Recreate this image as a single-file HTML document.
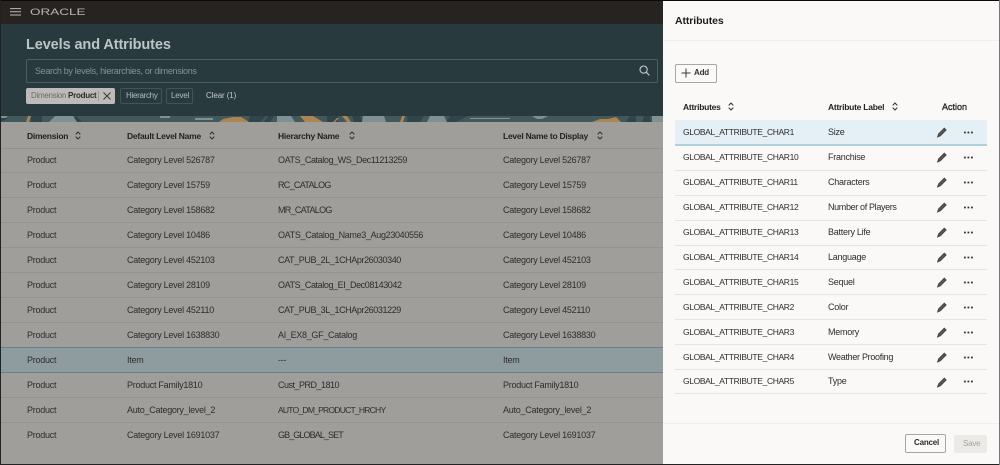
<!DOCTYPE html>
<html><head><meta charset="utf-8">
<style>
html,body{margin:0;padding:0;background:#000}
#p{position:relative;width:1000px;height:465px;overflow:hidden;background:#a09e9b;font-family:"Liberation Sans",sans-serif;font-size:9px;color:#2f2d2b}
#p div{position:absolute;white-space:nowrap}
.r{left:1px;width:662px;height:25px;border-bottom:1px solid #94928f;box-sizing:border-box}
.t{line-height:12px;letter-spacing:-.26px}
.g{font-size:8.5px;letter-spacing:-.36px}
.h{font-weight:bold;color:#24221f;font-size:8.5px;letter-spacing:-.25px}
.s{width:6px;height:9px;position:absolute}
.pr{left:675px;width:312px;height:25px;border-bottom:1px solid #e6e4e1;box-sizing:border-box}
</style></head><body>
<div id="p">
<div style="left:0;top:0;width:1000px;height:1px;background:#0a0a0a;z-index:9"></div>
<div style="left:0;top:0;width:1px;height:465px;background:#222;z-index:9"></div>
<div style="left:0;top:464px;width:1000px;height:1px;background:#222;z-index:9"></div>
<div style="left:999px;top:0;width:1px;height:465px;background:#777;z-index:9"></div>

<div style="left:0;top:1px;width:663px;height:23px;background:#272320"></div>
<svg style="position:absolute;left:10px;top:8px" width="11" height="8"><path d="M0 .6h11M0 3.8h11M0 7h11" stroke="#bdbbb8" stroke-width="1"/></svg>
<div class="t" style="left:30px;top:6px;font-size:9.5px;letter-spacing:0;color:#b9b7b4;line-height:13px;transform:scaleX(1.42);transform-origin:left">ORACLE</div>

<div style="left:0;top:24px;width:663px;height:98px;background:#283a3e"></div>
<svg style="position:absolute;left:0;top:116px" width="663" height="6">
<rect width="663" height="6" fill="#42595b"/>
<path d="M0 0h8l-1 3-7 3zM31 0h11v6H31zM76 0l6 6H70zM160 0h8l2 2-8 0zM250 0h16l-6 6h-12zM268 0h6l-4 6h-6zM327 0h11v6h-11zM352 0h8l3 6h-9zM407 0h17l-4 6h-13zM450 0h18l-12 6h-10zM630 0h6v6h-10zM644 0h6l1 6h-9z" fill="#2f4549"/>
<path d="M0 0h8l-2 2H0zM55 0h18l4 6H49zM277 0h14l4 6h-18zM363 0h21l2 6h-24zM430 0h14l3 6h-20zM532 0h16l-6 3h-5zM652 0h11v6h-11zM160 0h10v2h-10zM195 2h18v2h-18zM470 2h40v1h-40z" fill="#7f9193"/>
<path d="M28 0h3l-2 6h-3zM219 6l4-3 10-2 8 0 5 3 3 2zM300 0h13l10 6h-18zM333 6l4-4h2l-4 4zM342 0h5l4 6h-4zM402 0h3l-2 6h-3zM592 6l8-3 8 0 8-2 5 5z" fill="#ab8552"/>
</svg>

<div class="t" style="left:26px;top:36px;font-size:14.5px;letter-spacing:-.1px;line-height:18px;font-weight:bold;color:#bcc5c6">Levels and Attributes</div>
<div style="left:26px;top:59px;width:630px;height:22px;border:1px solid #4a5f62;border-radius:2px"></div>
<div class="t" style="left:35px;top:65px;letter-spacing:-.33px;color:#849192">Search by levels, hierarchies, or dimensions</div>
<svg style="position:absolute;left:639px;top:65px" width="11" height="11" fill="none" stroke="#c5cacb" stroke-width="1.1"><circle cx="4.6" cy="4.6" r="3.6"/><path d="M7.3 7.3l3 3"/></svg>

<div style="left:26px;top:88px;width:89px;height:16px;background:#bdbbb8;border-radius:2px"></div>
<div class="t" style="left:31px;top:90px;font-size:8px;letter-spacing:-.3px;color:#6c6a67">Dimension</div>
<div class="t" style="left:68px;top:90px;font-size:8px;letter-spacing:-.25px;font-weight:bold;color:#2b2926">Product</div>
<div style="left:98px;top:91px;width:1px;height:10px;background:#9e9c99"></div>
<svg style="position:absolute;left:103px;top:92px" width="8" height="8" stroke="#3a3835" stroke-width="1"><path d="M.5.5l7 7M7.5.5l-7 7"/></svg>
<div style="left:120px;top:88px;width:40px;height:14px;border:1px solid #3f5558;border-radius:2px"></div>
<div class="t" style="left:126px;top:90px;font-size:8px;letter-spacing:-.3px;color:#b4bcbc">Hierarchy</div>
<div style="left:166px;top:88px;width:25px;height:14px;border:1px solid #3f5558;border-radius:2px"></div>
<div class="t" style="left:171px;top:90px;font-size:8px;letter-spacing:-.2px;color:#b4bcbc">Level</div>
<div class="t" style="left:206px;top:90px;font-size:8px;letter-spacing:-.1px;color:#c2c8c8">Clear (1)</div>

<!-- left header -->
<div style="left:1px;top:148px;width:662px;height:1px;background:#92908d"></div>
<div class="t h" style="left:27px;top:130px">Dimension</div>
<svg class="s" style="left:75px;top:131px" viewBox="0 0 6 9" fill="none" stroke="#33312e"><path d="M.7 3.4L3 1l2.3 2.4M.7 5.6L3 8l2.3-2.400"/></svg>
<div class="t h" style="left:127px;top:130px">Default Level Name</div>
<svg class="s" style="left:209px;top:131px" viewBox="0 0 6 9" fill="none" stroke="#33312e"><path d="M.7 3.4L3 1l2.3 2.4M.7 5.6L3 8l2.3-2.400"/></svg>
<div class="t h" style="left:278px;top:130px">Hierarchy Name</div>
<svg class="s" style="left:349px;top:131px" viewBox="0 0 6 9" fill="none" stroke="#33312e"><path d="M.7 3.4L3 1l2.3 2.4M.7 5.6L3 8l2.3-2.400"/></svg>
<div class="t h" style="left:503px;top:130px">Level Name to Display</div>
<svg class="s" style="left:597px;top:131px" viewBox="0 0 6 9" fill="none" stroke="#33312e"><path d="M.7 3.4L3 1l2.3 2.4M.7 5.6L3 8l2.3-2.400"/></svg>

<!-- left rows -->
<div class="r" style="top:148px"></div><div class="t" style="left:27px;top:154px">Product</div><div class="t" style="left:127px;top:154px">Category Level 526787</div><div class="t" style="left:278px;top:154px;letter-spacing:-.4px">OATS_Catalog_WS_Dec11213259</div><div class="t" style="left:503px;top:154px">Category Level 526787</div>
<div class="r" style="top:173px"></div><div class="t" style="left:27px;top:179px">Product</div><div class="t" style="left:127px;top:179px">Category Level 15759</div><div class="t" style="left:278px;top:179px;letter-spacing:-.7px">RC_CATALOG</div><div class="t" style="left:503px;top:179px">Category Level 15759</div>
<div class="r" style="top:198px"></div><div class="t" style="left:27px;top:204px">Product</div><div class="t" style="left:127px;top:204px">Category Level 158682</div><div class="t" style="left:278px;top:204px;letter-spacing:-.7px">MR_CATALOG</div><div class="t" style="left:503px;top:204px">Category Level 158682</div>
<div class="r" style="top:223px"></div><div class="t" style="left:27px;top:229px">Product</div><div class="t" style="left:127px;top:229px">Category Level 10486</div><div class="t" style="left:278px;top:229px;letter-spacing:-.33px">OATS_Catalog_Name3_Aug23040556</div><div class="t" style="left:503px;top:229px">Category Level 10486</div>
<div class="r" style="top:248px"></div><div class="t" style="left:27px;top:254px">Product</div><div class="t" style="left:127px;top:254px">Category Level 452103</div><div class="t" style="left:278px;top:254px;letter-spacing:-.4px">CAT_PUB_2L_1CHApr26030340</div><div class="t" style="left:503px;top:254px">Category Level 452103</div>
<div class="r" style="top:273px"></div><div class="t" style="left:27px;top:279px">Product</div><div class="t" style="left:127px;top:279px">Category Level 28109</div><div class="t" style="left:278px;top:279px;letter-spacing:-.4px">OATS_Catalog_EI_Dec08143042</div><div class="t" style="left:503px;top:279px">Category Level 28109</div>
<div class="r" style="top:298px"></div><div class="t" style="left:27px;top:304px">Product</div><div class="t" style="left:127px;top:304px">Category Level 452110</div><div class="t" style="left:278px;top:304px;letter-spacing:-.4px">CAT_PUB_3L_1CHApr26031229</div><div class="t" style="left:503px;top:304px">Category Level 452110</div>
<div class="r" style="top:323px;border-bottom:0"></div><div class="t" style="left:27px;top:329px">Product</div><div class="t" style="left:127px;top:329px">Category Level 1638830</div><div class="t" style="left:278px;top:329px;letter-spacing:-.3px">AI_EX8_GF_Catalog</div><div class="t" style="left:503px;top:329px">Category Level 1638830</div>
<div style="left:1px;top:347px;width:662px;height:26px;box-sizing:border-box;background:#8f9c9f;border-top:1px solid #5f8593;border-bottom:1px solid #5f8593"></div><div class="t" style="left:27px;top:354px">Product</div><div class="t" style="left:127px;top:354px">Item</div><div class="t" style="left:278px;top:354px">---</div><div class="t" style="left:503px;top:354px">Item</div>
<div class="r" style="top:373px"></div><div class="t" style="left:27px;top:379px">Product</div><div class="t" style="left:127px;top:379px">Product Family1810</div><div class="t" style="left:278px;top:379px;letter-spacing:-.5px">Cust_PRD_1810</div><div class="t" style="left:503px;top:379px">Product Family1810</div>
<div class="r" style="top:398px"></div><div class="t" style="left:27px;top:404px">Product</div><div class="t" style="left:127px;top:404px">Auto_Category_level_2</div><div class="t" style="left:278px;top:404px;font-size:8.5px;letter-spacing:-.75px">AUTO_DM_PRODUCT_HRCHY</div><div class="t" style="left:503px;top:404px">Auto_Category_level_2</div>
<div class="t" style="left:27px;top:429px">Product</div><div class="t" style="left:127px;top:429px">Category Level 1691037</div><div class="t" style="left:278px;top:429px;letter-spacing:-.9px">GB_GLOBAL_SET</div><div class="t" style="left:503px;top:429px">Category Level 1691037</div>

<!-- right panel -->
<div style="left:663px;top:1px;width:336px;height:463px;background:#fbf9f8"></div>
<div style="left:663px;top:40px;width:336px;height:1px;background:#f0eeeb"></div>
<div class="t" style="left:675px;top:15px;font-size:10.5px;letter-spacing:-.1px;line-height:13px;font-weight:bold;color:#1f1d1b">Attributes</div>
<div style="left:675px;top:64px;width:40px;height:17px;border:1px solid #a8a6a3;border-radius:2px"></div>
<svg style="position:absolute;left:681px;top:68px" width="10" height="10" stroke="#3a3835" stroke-width="1"><path d="M5 .5v9M.5 5h9"/></svg>
<div class="t" style="left:694px;top:67px;font-size:8px;letter-spacing:-.2px;font-weight:bold;color:#34322f">Add</div>

<div class="t h" style="left:683px;top:101px">Attributes</div>
<svg class="s" style="left:728px;top:102px" viewBox="0 0 6 9" fill="none" stroke="#33312e"><path d="M.7 3.4L3 1l2.3 2.4M.7 5.6L3 8l2.3-2.400"/></svg>
<div class="t h" style="left:828px;top:101px">Attribute Label</div>
<svg class="s" style="left:892px;top:102px" viewBox="0 0 6 9" fill="none" stroke="#33312e"><path d="M.7 3.4L3 1l2.3 2.4M.7 5.6L3 8l2.3-2.400"/></svg>
<div class="t" style="left:942px;top:101px;letter-spacing:0;color:#24221f;-webkit-text-stroke:.3px #24221f">Action</div>

<div style="left:675px;top:120px;width:312px;height:26px;box-sizing:border-box;background:#e4f0f6;border-bottom:2px solid #b1d0dd"></div>
<div class="pr" style="top:146px"></div>
<div class="pr" style="top:171px"></div>
<div class="pr" style="top:196px"></div>
<div class="pr" style="top:221px"></div>
<div class="pr" style="top:245px"></div>
<div class="pr" style="top:270px"></div>
<div class="pr" style="top:295px"></div>
<div class="pr" style="top:320px"></div>
<div class="pr" style="top:345px"></div>
<div class="pr" style="top:369px"></div>

<div class="t g" style="left:683px;top:126px">GLOBAL_ATTRIBUTE_CHAR1</div><div class="t" style="left:828px;top:126px">Size</div>
<div class="t g" style="left:683px;top:151px">GLOBAL_ATTRIBUTE_CHAR10</div><div class="t" style="left:828px;top:151px">Franchise</div>
<div class="t g" style="left:683px;top:176px">GLOBAL_ATTRIBUTE_CHAR11</div><div class="t" style="left:828px;top:176px">Characters</div>
<div class="t g" style="left:683px;top:201px">GLOBAL_ATTRIBUTE_CHAR12</div><div class="t" style="left:828px;top:201px;letter-spacing:-.35px">Number of Players</div>
<div class="t g" style="left:683px;top:226px">GLOBAL_ATTRIBUTE_CHAR13</div><div class="t" style="left:828px;top:226px">Battery Life</div>
<div class="t g" style="left:683px;top:251px">GLOBAL_ATTRIBUTE_CHAR14</div><div class="t" style="left:828px;top:251px">Language</div>
<div class="t g" style="left:683px;top:276px">GLOBAL_ATTRIBUTE_CHAR15</div><div class="t" style="left:828px;top:276px">Sequel</div>
<div class="t g" style="left:683px;top:301px">GLOBAL_ATTRIBUTE_CHAR2</div><div class="t" style="left:828px;top:301px">Color</div>
<div class="t g" style="left:683px;top:326px">GLOBAL_ATTRIBUTE_CHAR3</div><div class="t" style="left:828px;top:326px">Memory</div>
<div class="t g" style="left:683px;top:351px">GLOBAL_ATTRIBUTE_CHAR4</div><div class="t" style="left:828px;top:351px;letter-spacing:-.3px">Weather Proofing</div>
<div class="t g" style="left:683px;top:375px">GLOBAL_ATTRIBUTE_CHAR5</div><div class="t" style="left:828px;top:375px">Type</div>

<svg style="position:absolute;left:929px;top:120px" width="50" height="275" fill="none">
<g stroke="#4a4845" stroke-width="1.400" fill="#6a6865">
<path d="M9 16.500l.8-2.500 5.500-5.500 1.500 1.500-5.500 5.500z"/><path d="M9 41.500l.8-2.500 5.500-5.500 1.500 1.500-5.500 5.500z"/><path d="M9 66.500l.8-2.500 5.500-5.500 1.500 1.500-5.500 5.500z"/><path d="M9 91.500l.8-2.500 5.500-5.500 1.500 1.500-5.500 5.500z"/><path d="M9 116.500l.8-2.500 5.500-5.500 1.500 1.500-5.500 5.500z"/><path d="M9 141.500l.8-2.500 5.500-5.500 1.500 1.500-5.500 5.500z"/><path d="M9 166.500l.8-2.500 5.500-5.500 1.500 1.500-5.500 5.500z"/><path d="M9 191.500l.8-2.500 5.500-5.500 1.500 1.500-5.500 5.500z"/><path d="M9 216.500l.8-2.500 5.500-5.500 1.500 1.500-5.500 5.500z"/><path d="M9 241.500l.8-2.500 5.500-5.500 1.500 1.500-5.500 5.500z"/><path d="M9 266.500l.8-2.500 5.500-5.500 1.500 1.500-5.500 5.500z"/>
</g>
<g stroke="#33312e" stroke-width="1.800" stroke-dasharray="1.800 1.700">
<path d="M35 12.500h9M35 37.500h9M35 62.500h9M35 87.500h9M35 112.500h9M35 137.500h9M35 162.500h9M35 187.500h9M35 212.500h9M35 237.500h9M35 261.500h9"/>
</g>
</svg>

<div style="left:663px;top:423px;width:336px;height:1px;background:#f0eeeb"></div>
<div style="left:905px;top:434px;width:39px;height:17px;border:1px solid #a8a6a3;border-radius:2px;background:#fbf9f8"></div>
<div class="t" style="left:914px;top:437px;font-size:8px;letter-spacing:-.2px;font-weight:bold;color:#2f2d2b">Cancel</div>
<div style="left:954px;top:435px;width:33px;height:18px;background:#eceae7;border-radius:2px"></div>
<div class="t" style="left:963px;top:438px;font-size:8px;letter-spacing:-.2px;color:#a5a3a0">Save</div>
</div>
</body></html>
